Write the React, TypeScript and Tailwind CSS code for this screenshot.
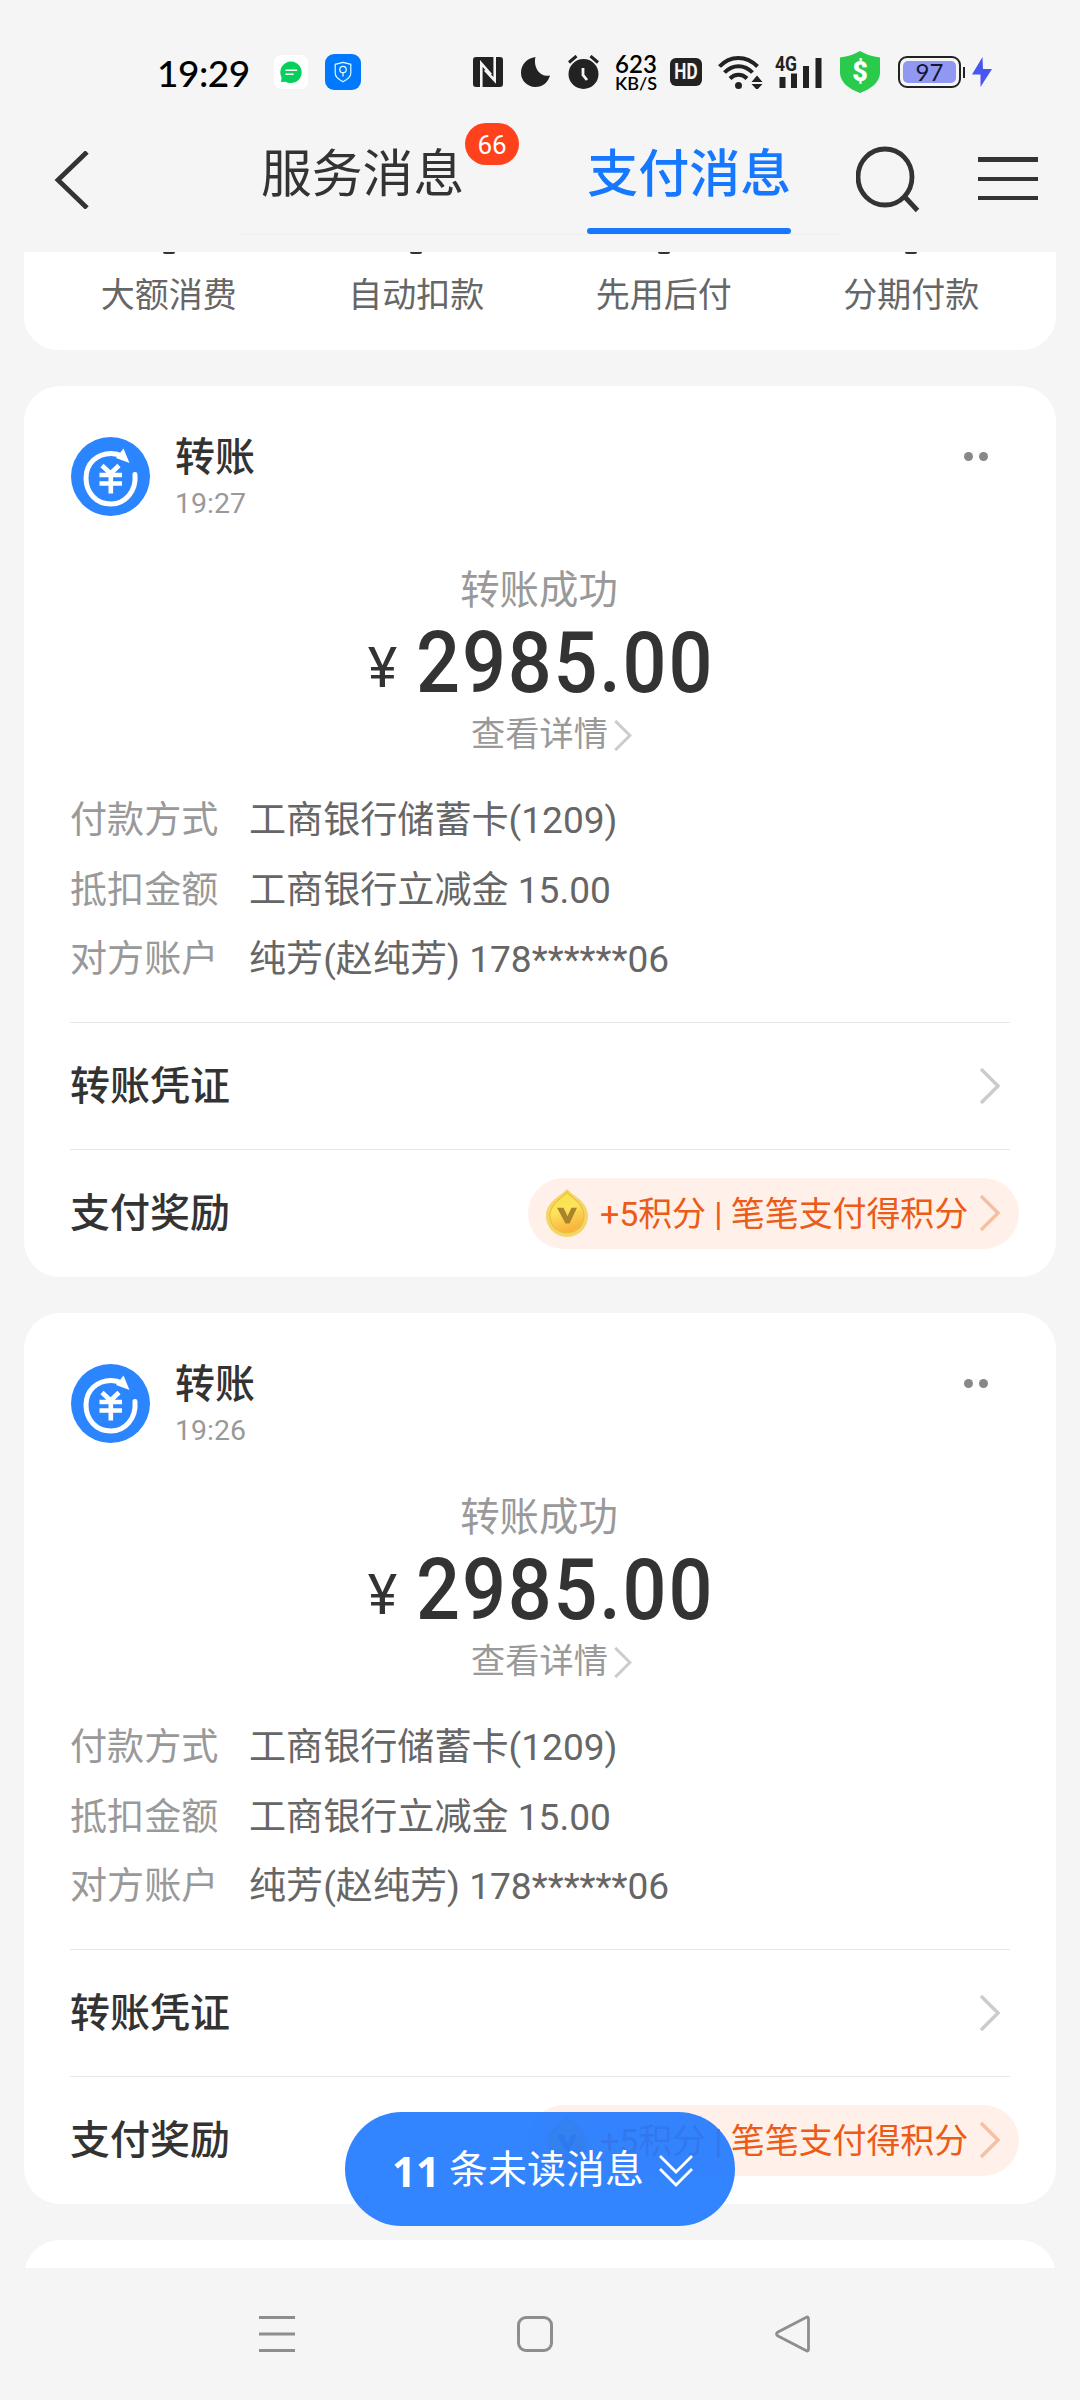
// App.tsx
// Payment messages list

const shortcuts = ["大额消费", "自动扣款", "先用后付", "分期付款"];

const messages = [
  {
    time: "19:27",
    amount: "2985.00",
    rows: [
      ["付款方式", "工商银行储蓄卡(1209)"],
      ["抵扣金额", "工商银行立减金 15.00"],
      ["对方账户", "纯芳(赵纯芳) 178******06"],
    ],
  },
  {
    time: "19:26",
    amount: "2985.00",
    rows: [
      ["付款方式", "工商银行储蓄卡(1209)"],
      ["抵扣金额", "工商银行立减金 15.00"],
      ["对方账户", "纯芳(赵纯芳) 178******06"],
    ],
  },
];

function Chevron({ className }: { className: string }) {
  return (
    <svg viewBox="0 0 20 36" fill="none" stroke="currentColor" strokeWidth="3.400" className={className}>
      <path d="M1 1l17 17L1 35" />
    </svg>
  );
}

function StatusBar() {
  return (
    <div className="flex h-[110px] items-center pl-[157px] pt-[34px] text-[#222]">
      <span className="w-[117px] font-['Lato'] text-[37px] font-medium leading-none tracking-[-0.500px] text-black">19:29</span>

      {/* App notifications */}
      <svg width="34" height="34" viewBox="0 0 34 34">
        <rect width="34" height="34" rx="7" fill="#fff" />
        <path d="M17 6.500a10.800 10.800 0 1 1-5.500 20.200L7 27l.6-4.500A10.800 10.800 0 0 1 17 6.500z" fill="#07cf5c" />
        <path d="M12 15.200h10.500M12 19.200h7" stroke="#fff" strokeWidth="1.600" strokeLinecap="round" />
      </svg>
      <svg width="36" height="36" viewBox="0 0 36 36" className="ml-[17px]">
        <rect width="36" height="36" rx="9" fill="#0079ff" />
        <path d="M18 8.300l7.800 2v9c0 4-4 6.500-7.800 8.500-3.800-2-7.800-4.500-7.800-8.500v-9z" fill="none" stroke="#dff" strokeWidth="1.200" />
        <circle cx="18" cy="15.500" r="3.200" fill="none" stroke="#dff" strokeWidth="1.300" />
        <path d="M18 18.500v4" stroke="#dff" strokeWidth="1.300" />
      </svg>

      {/* NFC */}
      <svg width="30" height="30" viewBox="0 0 30 30" className="ml-[112px]">
        <rect width="30" height="30" rx="3" fill="currentColor" />
        <path d="M8.300 30V6.500L18 17.500M21.700 0v23.500L12 13" fill="none" stroke="#f5f5f5" strokeWidth="2.600" />
      </svg>
      <svg width="29" height="30" viewBox="0 0 29 30" className="ml-[18px]">
        <path d="M14.500 0C12 9 18 21 29 18.500 27 25.500 21.500 30 14.500 30A14.300 14.300 0 0 1 0 15.500C0 8 6 1 14.500 0z" fill="currentColor" />
      </svg>
      <svg width="31" height="34" viewBox="0 0 31 34" className="ml-[18px]">
        <circle cx="15.500" cy="19" r="15" fill="currentColor" />
        <path d="M1 7.500L8.500 1M30 7.500L22.500 1" stroke="currentColor" strokeWidth="3" />
        <path d="M15 13v7l4 5" fill="none" stroke="#f5f5f5" strokeWidth="2.800" />
      </svg>

      {/* Network speed */}
      <div className="ml-[15px] flex w-[44px] flex-col items-center pt-[2px] font-['Lato'] font-semibold text-black">
        <span className="text-[24px] leading-[20px]">623</span>
        <span className="text-[18px] leading-[18px]">KB/S</span>
      </div>
      <div className="ml-[12px] flex h-[28px] w-[32px] items-center justify-center rounded-[6px] bg-[#222] font-['Roboto'] text-[22px] font-bold leading-none text-[#f5f5f5]">
        <span className="scale-x-[0.78]">HD</span>
      </div>
      <svg width="45" height="34" viewBox="0 0 45 34" className="ml-[16px]" fill="none" stroke="currentColor">
        <path d="M1.500 11.500c10.500-11.500 27-11.500 38 0" strokeWidth="4" />
        <path d="M6.500 17.500c8-8.500 20-8.500 28 0" strokeWidth="4" />
        <path d="M12 23.500c5-5 12-5 17 0" strokeWidth="4" />
        <circle cx="20.500" cy="30.500" r="3.500" fill="currentColor" stroke="none" />
        <path d="M39 20.500l5.500 6.500h-11zM39 35l5.500-6h-11z" fill="currentColor" stroke="none" />
      </svg>
      <svg width="48" height="42" viewBox="0 -4 48 42" className="ml-[12px]" fill="currentColor">
        <text x="0" y="16" fontFamily="Roboto" fontSize="20" fontWeight="700" textLength="22" lengthAdjust="spacingAndGlyphs">4G</text>
        <path d="M4.500 22h6v11h-6zM16 18.500h6v14.500h-6zM28 11h6v22h-6zM40.500 3h6v30h-6z" />
      </svg>

      {/* Security shield */}
      <svg width="40" height="42" viewBox="0 0 40 42" className="ml-[17px]">
        <path d="M20 0c6 3.500 12 5.500 20 6.500V22c0 9-9 16-20 20C9 38 0 31 0 22V6.500C8 5.500 14 3.500 20 0z" fill="#2acb4c" />
        <text x="20" y="30" textAnchor="middle" fontFamily="Roboto" fontSize="27" fontWeight="900" fill="#fff">$</text>
      </svg>

      {/* Battery */}
      <div className="ml-[18px] h-[32px] w-[63px] rounded-[9px] border-2 border-[#222] p-[3px]">
        <div className="flex h-full items-center justify-center rounded-[5px] bg-[#9198f2] font-['Lato'] text-[24px] leading-none text-[#15152e]">97</div>
      </div>
      <div className="ml-[2px] h-[11px] w-[2px] bg-[#222]" />
      <svg width="20" height="30" viewBox="0 0 20 30" className="ml-[7px]">
        <path d="M10.500 0L0 17.500h8.500V30L20 12h-9z" fill="#4855ee" />
      </svg>
    </div>
  );
}

function Header() {
  return (
    <header className="flex h-[142px] items-start">
      <svg width="36" height="58" viewBox="0 0 36 58" fill="none" stroke="#333" strokeWidth="4.800" className="ml-[54px] mt-[41px]">
        <path d="M33 1L4 29l29 28" />
      </svg>
      <nav className="ml-[150px] flex h-[125px] w-[600px] items-start border-b border-[#efefef]">
        <div className="relative ml-[21px] mt-[29px] text-[50.800px] leading-[72px] text-[#333]">
          服务消息
          <span className="absolute -top-[16px] left-[204px] flex h-[42px] w-[54px] items-center justify-center rounded-full bg-[#ff411c] pt-[2px] text-[26px] leading-none text-white">
            66
          </span>
        </div>
        <div className="ml-[123px] mt-[29px] flex flex-col text-[51px] font-medium leading-[72px] text-[#1677ff]">
          支付消息
          <i className="mt-[17px] h-[6px] w-[204px] rounded-full bg-[#1677ff]" />
        </div>
      </nav>
      <svg width="66" height="68" viewBox="0 0 66 68" fill="none" stroke="#333" strokeWidth="4.800" className="ml-[16px] mt-[36px]">
        <ellipse cx="29" cy="31" rx="27" ry="28" />
        <path d="M48 50l13.500 14.500" />
      </svg>
      <div className="ml-[56px] mt-[47px] flex flex-col gap-[15px]">
        <i className="h-[5px] w-[60px] bg-[#333]" />
        <i className="h-[4px] w-[60px] bg-[#333]" />
        <i className="h-[4px] w-[60px] bg-[#333]" />
      </div>
    </header>
  );
}

function TransferIcon() {
  return (
    <svg width="79" height="79" viewBox="0 0 79 79" fill="none" stroke="#fff">
      <circle cx="39.500" cy="39.500" r="39.500" fill="#2b85ff" stroke="none" />
      <path d="M64 37.500c1.500 17-10 29.500-24 29.500-15 0-25-11.500-25-26S26 16.500 40 16.500c4.500 0 8 1 12 3" strokeWidth="5" strokeLinecap="round" />
      <path d="M52.500 11.500l6 14.500-13.500-5z" fill="#fff" stroke="none" />
      <path d="M31 28.500l8.500 8 8.500-8M28.500 38h22.500M28.500 46.500h22.500M39.800 36v20.500" strokeWidth="4.600" />
    </svg>
  );
}

function CoinIcon() {
  return (
    <svg width="42" height="48" viewBox="0 0 42 46" preserveAspectRatio="none">
      <defs>
        <linearGradient id="coin" x1="0" y1="0" x2="0.300" y2="1">
          <stop offset="0" stopColor="#f3e43c" />
          <stop offset="0.500" stopColor="#fde45c" />
          <stop offset="1" stopColor="#f9b53c" />
        </linearGradient>
      </defs>
      <path d="M21 0c4 5 21 12 21 25.500C42 37 33 46 21 46S0 37 0 25.500C0 12 17 5 21 0z" fill="#f5d568" />
      <path d="M21 3c4 5 17 11 17 22.500C38 35 31 42 21 42S4 35 4 25.500C4 14 17 8 21 3z" fill="url(#coin)" stroke="#e9bd3c" strokeWidth="1" />
      <path d="M11 18h6.500l4 8 4-8H31L23.500 33h-4z" fill="#a8842a" />
    </svg>
  );
}

function MessageCard({ message }: { message: (typeof messages)[number] }) {
  return (
    <section className="h-[891px] shrink-0 rounded-[36px] bg-white pl-[46px] pt-[44px]">
      <div className="flex h-[94px]">
        <div className="ml-px mt-[7px]">
          <TransferIcon />
        </div>
        <div className="ml-[25px] flex-1">
          <div className="text-[40px] font-medium leading-[55px] text-[#333]">转账</div>
          <div className="text-[28.500px] leading-[37px] text-[#999]">{message.time}</div>
        </div>
        <div className="mr-[68px] mt-[22px] flex gap-[6px]">
          <i className="size-[9px] rounded-full bg-[#888]" />
          <i className="size-[9px] rounded-full bg-[#888]" />
        </div>
      </div>

      {/* Amount */}
      <div className="mr-[48px] mt-[40px] flex flex-col items-center">
        <div className="text-[39.400px] leading-[54px] text-[#999]">转账成功</div>
        <div className="ml-[4px] flex h-[90px] items-baseline leading-[90px] text-[#333]">
          <span className="relative -top-[5px] -mr-[14px] text-[56px]">¥</span>
          <span className="origin-right scale-x-90 text-[86px] font-medium tracking-[2px]">{message.amount}</span>
        </div>
        <div className="ml-[21px] flex h-[54px] items-center text-[34.200px] text-[#999]">
          <span className="pl-[4px]">查看详情</span>
          <Chevron className="ml-[6px] h-[31px] w-[18px] text-[#ccc]" />
        </div>
      </div>

      {/* Details */}
      <div className="mt-[24px] grid h-[209px] grid-cols-[179px_1fr] text-[37.100px] leading-[69.500px]">
        {message.rows.map(([label, value]) => (
          <div key={label} className="contents">
            <span className="text-[#999]">{label}</span>
            <span className="text-[#666]">{value}</span>
          </div>
        ))}
      </div>

      <div className="mr-[46px] mt-[27px] flex h-[127px] items-center justify-between border-t border-[#e8e8e8] text-[40px] font-medium text-[#333]">
        <span className="pt-[2px]">转账凭证</span>
        <Chevron className="mr-[10px] h-[36px] w-[20px] text-[#ccc]" />
      </div>
      <div className="mr-[46px] flex h-[127px] items-center justify-between border-t border-[#e8e8e8] text-[40px] font-medium text-[#333]">
        <span className="pt-[2px]">支付奖励</span>
        <div className="-mr-[9px] flex h-[71px] w-[491px] items-center rounded-full bg-[#fff1e9] pl-[18px] text-[34px] font-normal text-[#ec5b17]">
          <CoinIcon />
          <span className="ml-[12px] whitespace-nowrap pt-[2px] tracking-[-0.100px]">+5积分 | 笔笔支付得积分</span>
          <Chevron className="ml-auto mr-[19px] h-[36px] w-[20px] text-[#f5bfa3]" />
        </div>
      </div>
    </section>
  );
}

export default function App() {
  return (
    <div className="relative flex h-[2400px] w-[1080px] flex-col overflow-hidden bg-[#f5f5f5] font-['Roboto','Noto_Sans_CJK_SC',sans-serif]">
      <StatusBar />
      <Header />

      <main className="flex h-[2016px] flex-col gap-9 overflow-hidden px-6">
        <div className="grid h-[98px] shrink-0 grid-cols-4 rounded-b-[34px] bg-white px-[21px] text-center text-[34px] text-[#666]">
          {shortcuts.map((name) => (
            <div key={name}>
              <i className="mx-auto block h-[2px] w-[12px] rounded-b-full bg-[#333]" />
              <span className="block leading-[83px]">{name}</span>
            </div>
          ))}
        </div>
        {messages.map((message) => (
          <MessageCard key={message.time} message={message} />
        ))}
        <div className="h-[120px] shrink-0 rounded-t-[36px] bg-white" />
      </main>

      {/* Unread messages */}
      <button className="absolute left-[345px] top-[2112px] flex h-[114px] w-[390px] items-center rounded-full bg-[#2279ff]/92 pl-[46px] pt-[3px] text-[39px] text-white">
        <b className="w-[58px] -translate-x-[4px] font-['Open_Sans'] text-[42px] leading-none">11</b>
        条未读消息
        <svg width="34" height="32" viewBox="0 0 34 32" fill="none" stroke="#fff" strokeWidth="2.800" className="ml-[15px]">
          <path d="M1 1l16 16L33 1M1 14l16 16 16-16" />
        </svg>
      </button>

      {/* System navigation */}
      <footer className="flex h-[132px] items-center pl-[259px]">
        <svg width="36" height="38" viewBox="0 0 36 38" stroke="#8e8e8e" strokeWidth="3">
          <path d="M0 2.500h36M0 19h36M0 35.500h36" />
        </svg>
        <div className="ml-[222px] size-[36px] rounded-[9px] border-[3px] border-[#8e8e8e]" />
        <svg width="36" height="38" viewBox="0 0 36 38" fill="none" stroke="#8e8e8e" strokeWidth="2.800" strokeLinejoin="round" className="ml-[222px]">
          <path d="M31 2.500Q33.500 1 33.500 4v30q0 3-2.500 1.500L3 21q-3-2 0-4z" />
        </svg>
      </footer>
    </div>
  );
}
